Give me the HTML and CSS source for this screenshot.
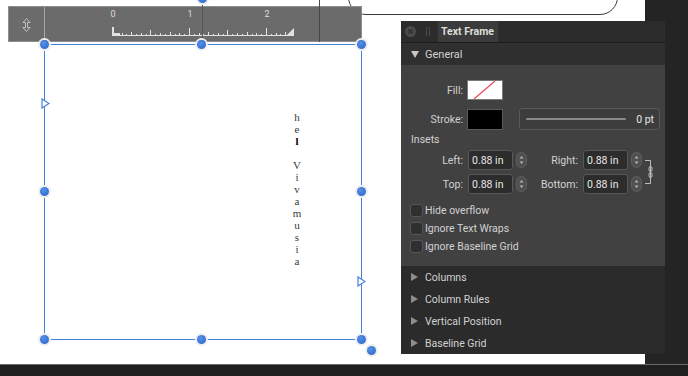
FILE: index.html
```html
<!DOCTYPE html>
<html lang="en">
<head>
  <meta charset="UTF-8">
  <title>Text Frame</title>
  <link rel="stylesheet" href="styles.css">
</head>
<body>

  <div class="workspace">
    <div class="canvas">
      <div class="shape"></div>

      <div class="ruler">
        <svg width="352" height="34" viewBox="9 7 352 34">
          <line x1="44.5" y1="7" x2="44.5" y2="41" stroke="#a6a6a6"/>
          <path d="M26.5 18.5l-3.5 4h2.5v5h-2.5l3.5 4l3.5-4h-2.5v-5h2.5z" fill="none" stroke="#d2d2d2" stroke-width="0.8"/>
          <g class="ruler-labels" fill="#dedede" font-size="9" text-anchor="middle">
            <text x="113" y="17">0</text>
            <text x="190" y="17">1</text>
            <text x="267" y="17">2</text>
          </g>
          <path d="M112 35.5H292" stroke="#e2e2e2"/>
          <path stroke="#e2e2e2" d="M117.5 35v-1M122.5 35v-2M126.5 35v-1M131.5 35v-3M136.5 35v-1M141.5 35v-2M146.5 35v-1M150.5 35v-5M155.5 35v-1M160.5 35v-2M165.5 35v-1M170.5 35v-3M175.5 35v-1M179.5 35v-2M184.5 35v-1M189.5 35v-7M194.5 35v-1M199.5 35v-2M203.5 35v-1M208.5 35v-3M213.5 35v-1M218.5 35v-2M223.5 35v-1M227.5 35v-5M232.5 35v-1M237.5 35v-2M242.5 35v-1M247.5 35v-3M252.5 35v-1M256.5 35v-2M261.5 35v-1M266.5 35v-7M271.5 35v-1M276.5 35v-2M280.5 35v-1M285.5 35v-3"/>
          <path d="M112 27h2v6h6v3h-8z" fill="#e2e2e2"/>
          <path d="M294 28V36H286z" fill="#e2e2e2"/>
        </svg>
      </div>

      <div class="guide guide-center"></div>
      <div class="guide guide-edge"></div>
      <div class="handle handle-top"></div>

      <div class="frame">
        <div class="story">
          <span>h</span>
          <span>e</span>
          <span class="caret">l</span>
          <span>&nbsp;</span>
          <span>V</span>
          <span>i</span>
          <span>v</span>
          <span>a</span>
          <span>m</span>
          <span>u</span>
          <span>s</span>
          <span>i</span>
          <span>a</span>
        </div>

        <svg class="port port-in" width="9" height="11" viewBox="0 0 9 11"><polygon points="1,1 8,5.5 1,10" fill="#fff" stroke="#4680db" stroke-width="1.2"/></svg>
        <svg class="port port-out" width="9" height="11" viewBox="0 0 9 11"><polygon points="1,1 8,5.5 1,10" fill="#fff" stroke="#4680db" stroke-width="1.2"/></svg>

        <div class="handle top left"></div>
        <div class="handle top center"></div>
        <div class="handle top right"></div>
        <div class="handle middle left"></div>
        <div class="handle middle right"></div>
        <div class="handle bottom left"></div>
        <div class="handle bottom center"></div>
        <div class="handle bottom right"></div>
        <div class="handle extra"></div>
      </div>
    </div>
    <div class="gutter"></div>
  </div>
  <div class="statusbar"></div>

  <div class="panel">
    <div class="panel-bar">
      <svg class="close" width="11" height="11" viewBox="0 0 11 11">
        <circle cx="5.5" cy="5.5" r="5.5" fill="#4b4b4b"/>
        <path d="M3.3 3.3l4.4 4.4M7.7 3.3l-4.4 4.4" stroke="#2b2b2b" stroke-width="1.2"/>
      </svg>
      <span class="grip"></span>
      <span class="tab">Text Frame</span>
    </div>

    <div class="section-head general"><span class="tri tri-down"></span>General</div>

    <div class="section-body">
      <div class="row fill-row">
        <span class="lbl">Fill:</span>
        <span class="swatch swatch-fill">
          <svg width="34" height="18" viewBox="0 0 34 18"><line x1="6" y1="18" x2="27" y2="0" stroke="#e8505b" stroke-width="1.3"/></svg>
        </span>
      </div>

      <div class="row stroke-row">
        <span class="lbl">Stroke:</span>
        <span class="swatch swatch-stroke"></span>
        <div class="slider">
          <span class="track"></span>
          <span class="val">0 pt</span>
        </div>
      </div>

      <div class="group-title">Insets</div>

      <div class="insets">
        <span class="lbl">Left:</span>
        <span class="num">0.88 in</span>
        <svg class="stepper" width="11" height="16" viewBox="0 0 11 16"><rect x="0.5" y="0.5" width="10" height="15" rx="5" fill="#505050" stroke="#5f5f5f"/><path d="M5.5 4l2 2.5h-4z M5.5 12l2-2.5h-4z" fill="#b4b4b4"/></svg>
        <span class="lbl">Right:</span>
        <span class="num">0.88 in</span>
        <svg class="stepper" width="11" height="16" viewBox="0 0 11 16"><rect x="0.5" y="0.5" width="10" height="15" rx="5" fill="#505050" stroke="#5f5f5f"/><path d="M5.5 4l2 2.5h-4z M5.5 12l2-2.5h-4z" fill="#b4b4b4"/></svg>
        <svg class="chain" width="9" height="24" viewBox="0 0 9 24">
          <path d="M0 0.5H5.5V23.5H0" fill="none" stroke="#bcbcbc"/>
          <rect x="4" y="6.5" width="3" height="5" rx="1.5" fill="none" stroke="#bcbcbc"/>
          <rect x="4" y="12.5" width="3" height="5" rx="1.5" fill="none" stroke="#bcbcbc"/>
        </svg>

        <span class="lbl">Top:</span>
        <span class="num">0.88 in</span>
        <svg class="stepper" width="11" height="16" viewBox="0 0 11 16"><rect x="0.5" y="0.5" width="10" height="15" rx="5" fill="#505050" stroke="#5f5f5f"/><path d="M5.5 4l2 2.5h-4z M5.5 12l2-2.5h-4z" fill="#b4b4b4"/></svg>
        <span class="lbl">Bottom:</span>
        <span class="num">0.88 in</span>
        <svg class="stepper" width="11" height="16" viewBox="0 0 11 16"><rect x="0.5" y="0.5" width="10" height="15" rx="5" fill="#505050" stroke="#5f5f5f"/><path d="M5.5 4l2 2.5h-4z M5.5 12l2-2.5h-4z" fill="#b4b4b4"/></svg>
      </div>

      <div class="checks">
        <label class="check"><span class="box"></span>Hide overflow</label>
        <label class="check"><span class="box"></span>Ignore Text Wraps</label>
        <label class="check"><span class="box"></span>Ignore Baseline Grid</label>
      </div>
    </div>

    <div class="section-head"><span class="tri tri-right"></span>Columns</div>
    <div class="section-head"><span class="tri tri-right"></span>Column Rules</div>
    <div class="section-head"><span class="tri tri-right"></span>Vertical Position</div>
    <div class="section-head"><span class="tri tri-right"></span>Baseline Grid</div>
  </div>

</body>
</html>
```

FILE: styles.css
```css
* {
  box-sizing: border-box;
}

body {
  margin: 0;
  width: 688px;
  height: 376px;
  overflow: hidden;
  position: relative;
  background: #1f1f1f;
  font-family: Roboto, "Liberation Sans", sans-serif;
}

.workspace {
  display: flex;
  height: 364px;
}

.canvas {
  width: 645px;
  position: relative;
  background: #fff;
  overflow: hidden;
}

.gutter {
  flex-grow: 1;
  background: #242424;
}

.statusbar {
  height: 12px;
  border-top: 1px solid #6b6b6b;
  background: #1f1f1f;
}

/* canvas objects */

.shape {
  position: absolute;
  left: 348px;
  top: -30px;
  width: 270px;
  height: 45px;
  border: 1px solid #3a3a3a;
  border-radius: 18px;
}

.ruler {
  position: absolute;
  left: 8px;
  top: 6px;
  width: 354px;
  height: 36px;
  background: #6b6b6b;
  border: 1px solid #8e8e8e;
}

.ruler svg {
  display: block;
}

.ruler-labels {
  font-family: Roboto, "Liberation Sans", sans-serif;
}

.guide {
  position: absolute;
  top: 0;
  width: 1px;
  background: #575757;
}

.guide-center {
  left: 202px;
  height: 44px;
}

.guide-edge {
  left: 319px;
  height: 42px;
  background: #474747;
}

.frame {
  position: absolute;
  left: 44px;
  top: 44px;
  width: 318px;
  height: 296px;
  border: 1px solid #4680db;
}

.handle {
  position: absolute;
  width: 9px;
  height: 9px;
  border-radius: 50%;
  background: radial-gradient(circle at 40% 35%, #5590e8, #2762c8);
  box-shadow: 0 0 0 2px #eeeeee;
}

.handle.top { top: -5px; }
.handle.middle { top: calc(50% - 5px); }
.handle.bottom { bottom: -5px; }
.handle.left { left: -5px; }
.handle.center { left: calc(50% - 6px); }
.handle.right { right: -5px; }

.handle.extra {
  right: -15px;
  bottom: -16px;
}

.handle-top {
  left: 198px;
  top: -6px;
}

.port {
  position: absolute;
  display: block;
}

.port-in {
  left: -4px;
  top: 53px;
}

.port-out {
  right: -5px;
  top: 231px;
}

.story {
  position: absolute;
  left: 246px;
  top: 66px;
  width: 12px;
  display: flex;
  flex-direction: column;
  font-family: "Liberation Serif", serif;
  font-size: 11px;
  line-height: 12px;
  color: #3a3a3a;
  text-align: center;
}

.caret {
  font-weight: bold;
  color: #000;
}

/* panel */

.panel {
  position: absolute;
  left: 401px;
  top: 21px;
  width: 264px;
  height: 333px;
  display: flex;
  flex-direction: column;
  background: #2b2b2b;
  color: #d2d2d2;
  font-size: 10.5px;
}

.panel-bar {
  height: 22px;
  flex: none;
  display: flex;
  align-items: center;
  background: #2c2c2c;
  border-bottom: 1px solid #1c1c1c;
}

.close {
  margin-left: 4px;
}

.grip {
  width: 4px;
  height: 9px;
  margin-left: 10px;
  border-left: 1px solid #4b4b4b;
  border-right: 1px solid #4b4b4b;
}

.tab {
  align-self: stretch;
  width: 60px;
  margin-left: 8px;
  padding-left: 3px;
  display: flex;
  align-items: center;
  background: #3b3b3b;
  color: #dedede;
  font-weight: bold;
}

.section-head {
  height: 22px;
  flex: none;
  display: flex;
  align-items: center;
  gap: 7px;
  padding-left: 10px;
}

.general {
  background: #2f2f2f;
  font-size: 11px;
  gap: 6px;
}

.tri {
  width: 0;
  height: 0;
  border-style: solid;
  border-color: transparent;
}

.tri-down {
  border-width: 7px 4px 0 4px;
  border-top-color: #c6c6c6;
}

.tri-right {
  border-width: 4px 0 4px 7px;
  border-left-color: #8d8d8d;
}

.section-body {
  height: 201px;
  flex: none;
  padding: 15px 0 11px;
  background: #414141;
}

.row {
  display: flex;
  align-items: center;
}

.lbl {
  width: 62px;
  flex: none;
  text-align: right;
}

.fill-row {
  height: 20px;
}

.swatch {
  width: 36px;
  height: 20px;
  margin-left: 4px;
  border: 1px solid #7a7a7a;
}

.swatch svg {
  display: block;
}

.swatch-fill {
  background: #fff;
}

.stroke-row {
  height: 22px;
  margin-top: 8px;
}

.swatch-stroke {
  height: 21px;
  background: #000;
  border-color: #5a5a5a;
}

.slider {
  width: 141px;
  height: 22px;
  margin-left: 16px;
  padding: 0 5px 0 6px;
  display: flex;
  align-items: center;
  background: #3c3c3c;
  border: 1px solid #595959;
  border-radius: 3px;
}

.track {
  width: 100px;
  height: 2px;
  border-radius: 1px;
  background: #8a8a8a;
}

.val {
  margin-left: auto;
  color: #e6e6e6;
}

.group-title {
  margin-top: 4px;
  height: 12px;
  line-height: 12px;
  padding-left: 10px;
}

.insets {
  margin-top: 4px;
  display: grid;
  grid-template-columns: 62px 50px 14px 51px 50px 14px 12px;
  grid-template-rows: 20px 20px;
  row-gap: 4px;
  align-items: center;
}

.insets .lbl {
  width: auto;
}

.num {
  height: 20px;
  margin-left: 5px;
  padding-left: 3px;
  display: flex;
  align-items: center;
  background: #2c2c2c;
  border: 1px solid #575757;
  border-radius: 3px;
  color: #e8e8e8;
}

.stepper {
  display: block;
  margin-left: 3px;
}

.chain {
  display: block;
  grid-column: 7;
  grid-row: 1 / span 2;
  margin-left: 3px;
}

.checks {
  margin-top: 7px;
  padding-left: 9px;
}

.check {
  height: 18px;
  display: flex;
  align-items: center;
  gap: 2px;
}

.box {
  width: 13px;
  height: 13px;
  background: #2f2f2f;
  border: 1px solid #565656;
  border-radius: 3px;
}
```
